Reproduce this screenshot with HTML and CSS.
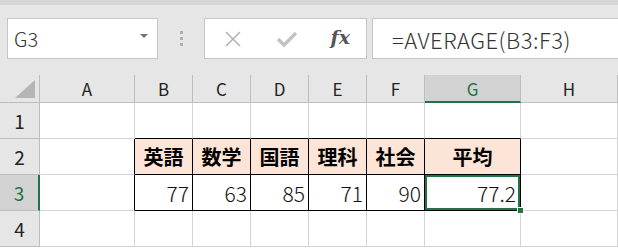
FILE: index.html
```html
<!doctype html>
<html>
  <head>
    <title>Sheet</title>
    <meta charset="utf-8" />
    <link rel="stylesheet" href="styles.css">
  </head>
  <body>
    <div id="toolbar">
      <div id="name-box">
        <span>G3</span>
        <span class="caret"></span>
      </div>
      <div id="grip">
        <i></i><i></i><i></i>
      </div>
      <div id="fx-buttons">
        <svg width="20" height="20" viewBox="0 0 20 20">
          <path d="M3 3 L17 17 M17 3 L3 17" stroke="#b4b4b4" stroke-width="1.6" fill="none" />
        </svg>
        <svg width="22" height="20" viewBox="0 0 22 20">
          <path d="M2 10 L8 16 L20 4" stroke="#c2c2c2" stroke-width="3.4" fill="none" />
        </svg>
        <span class="fx">fx</span>
      </div>
      <div id="formula">=AVERAGE(B3:F3)</div>
    </div>

    <div id="sheet">
      <div class="hd corner">
        <svg width="22" height="20" viewBox="0 0 22 20">
          <polygon points="21,1 21,19 1,19" fill="#b5b5b5" />
        </svg>
      </div>
      <div class="hd col">A</div>
      <div class="hd col">B</div>
      <div class="hd col">C</div>
      <div class="hd col">D</div>
      <div class="hd col">E</div>
      <div class="hd col">F</div>
      <div class="hd col active">G</div>
      <div class="hd col">H</div>

      <div class="hd row">1</div>
      <div class="cell"></div>
      <div class="cell above"></div>
      <div class="cell above"></div>
      <div class="cell above"></div>
      <div class="cell above"></div>
      <div class="cell above"></div>
      <div class="cell above"></div>
      <div class="cell"></div>

      <div class="hd row">2</div>
      <div class="cell before"></div>
      <div class="cell boxed title">英語</div>
      <div class="cell boxed title">数学</div>
      <div class="cell boxed title">国語</div>
      <div class="cell boxed title">理科</div>
      <div class="cell boxed title">社会</div>
      <div class="cell boxed title">平均</div>
      <div class="cell"></div>

      <div class="hd row active">3</div>
      <div class="cell before"></div>
      <div class="cell boxed num">77</div>
      <div class="cell boxed num">63</div>
      <div class="cell boxed num">85</div>
      <div class="cell boxed num">71</div>
      <div class="cell boxed num">90</div>
      <div class="cell boxed num selected">77.2<span class="handle"></span></div>
      <div class="cell"></div>

      <div class="hd row">4</div>
      <div class="cell"></div>
      <div class="cell"></div>
      <div class="cell"></div>
      <div class="cell"></div>
      <div class="cell"></div>
      <div class="cell"></div>
      <div class="cell"></div>
      <div class="cell"></div>
    </div>
  </body>
</html>
```

FILE: styles.css
```css
* {
  box-sizing: border-box;
}

body {
  margin: 0;
  width: 618px;
  height: 248px;
  overflow: hidden;
  background: #ffffff;
  color: #222222;
  font-family: "Noto Sans CJK JP", "Noto Sans", sans-serif;
}

#toolbar {
  height: 75px;
  background: #e6e6e6;
  border-top: 5px solid #d6d6d6;
  padding: 13px 0 0 7px;
  display: flex;
  align-items: flex-start;
}

#name-box,
#fx-buttons,
#formula {
  height: 41px;
  background: #ffffff;
  border: 1px solid #c6c6c6;
  display: flex;
  align-items: center;
}

#name-box {
  width: 151px;
  padding: 0 9px 0 6px;
  justify-content: space-between;
  font-size: 20px;
  font-weight: 300;
  color: #333333;
}

.caret {
  width: 0;
  height: 0;
  border-left: 4px solid transparent;
  border-right: 4px solid transparent;
  border-top: 4px solid #707070;
  margin-top: -6px;
}

#grip {
  width: 46px;
  height: 41px;
  display: flex;
  flex-direction: column;
  align-items: center;
  justify-content: center;
  gap: 3px;
}

#grip i {
  display: block;
  width: 3px;
  height: 3px;
  background: #b0b0b0;
}

#fx-buttons {
  width: 163px;
  margin-right: 5px;
  padding: 0 16px 0 18px;
  justify-content: space-between;
}

.fx {
  font-family: "DejaVu Serif", "Liberation Serif", serif;
  font-style: italic;
  font-weight: bold;
  font-size: 19px;
  color: #555555;
  margin-top: -4px;
}

#formula {
  flex: 1;
  border-right: none;
  padding-left: 19px;
  font-size: 22px;
  font-weight: 300;
  color: #333333;
  letter-spacing: 0.5px;
}

#sheet {
  display: grid;
  grid-template-columns: 40px 95px 58px 58px 58px 58px 58px 96px 1fr;
  grid-template-rows: 28px 36px 36px 36px 36px;
}

.hd {
  background: #e6e6e6;
  border-right: 1px solid #bdbdbd;
  border-bottom: 1px solid #bdbdbd;
  display: flex;
  align-items: center;
  justify-content: center;
  font-size: 17px;
  color: #222222;
}

.hd.corner {
  justify-content: flex-end;
  align-items: flex-end;
  padding: 0 3px 3px 0;
}

.hd.row {
  font-size: 19px;
}

.hd.col.active {
  background: #d2d2d2;
  color: #217346;
  border-bottom: 2px solid #217346;
}

.hd.row.active {
  background: #d2d2d2;
  color: #217346;
  border-right: 2px solid #217346;
}

.cell {
  border-right: 1px solid #d4d4d4;
  border-bottom: 1px solid #d4d4d4;
  display: flex;
  align-items: center;
}

.cell.above {
  border-bottom-color: #000000;
}

.cell.before {
  border-right-color: #000000;
}

.cell.boxed {
  border-right-color: #000000;
  border-bottom-color: #000000;
}

.title {
  background: #fce4d6;
  justify-content: center;
  font-weight: bold;
  font-size: 20px;
  color: #000000;
}

.num {
  justify-content: flex-end;
  padding-right: 3px;
  font-size: 21px;
  font-weight: 300;
  color: #111111;
}

.selected {
  position: relative;
  box-shadow: inset 0 0 0 2px #217346;
  padding-right: 4px;
}

.handle {
  position: absolute;
  right: -4px;
  bottom: -4px;
  width: 7px;
  height: 7px;
  background: #217346;
  border: 1px solid #ffffff;
}
```
